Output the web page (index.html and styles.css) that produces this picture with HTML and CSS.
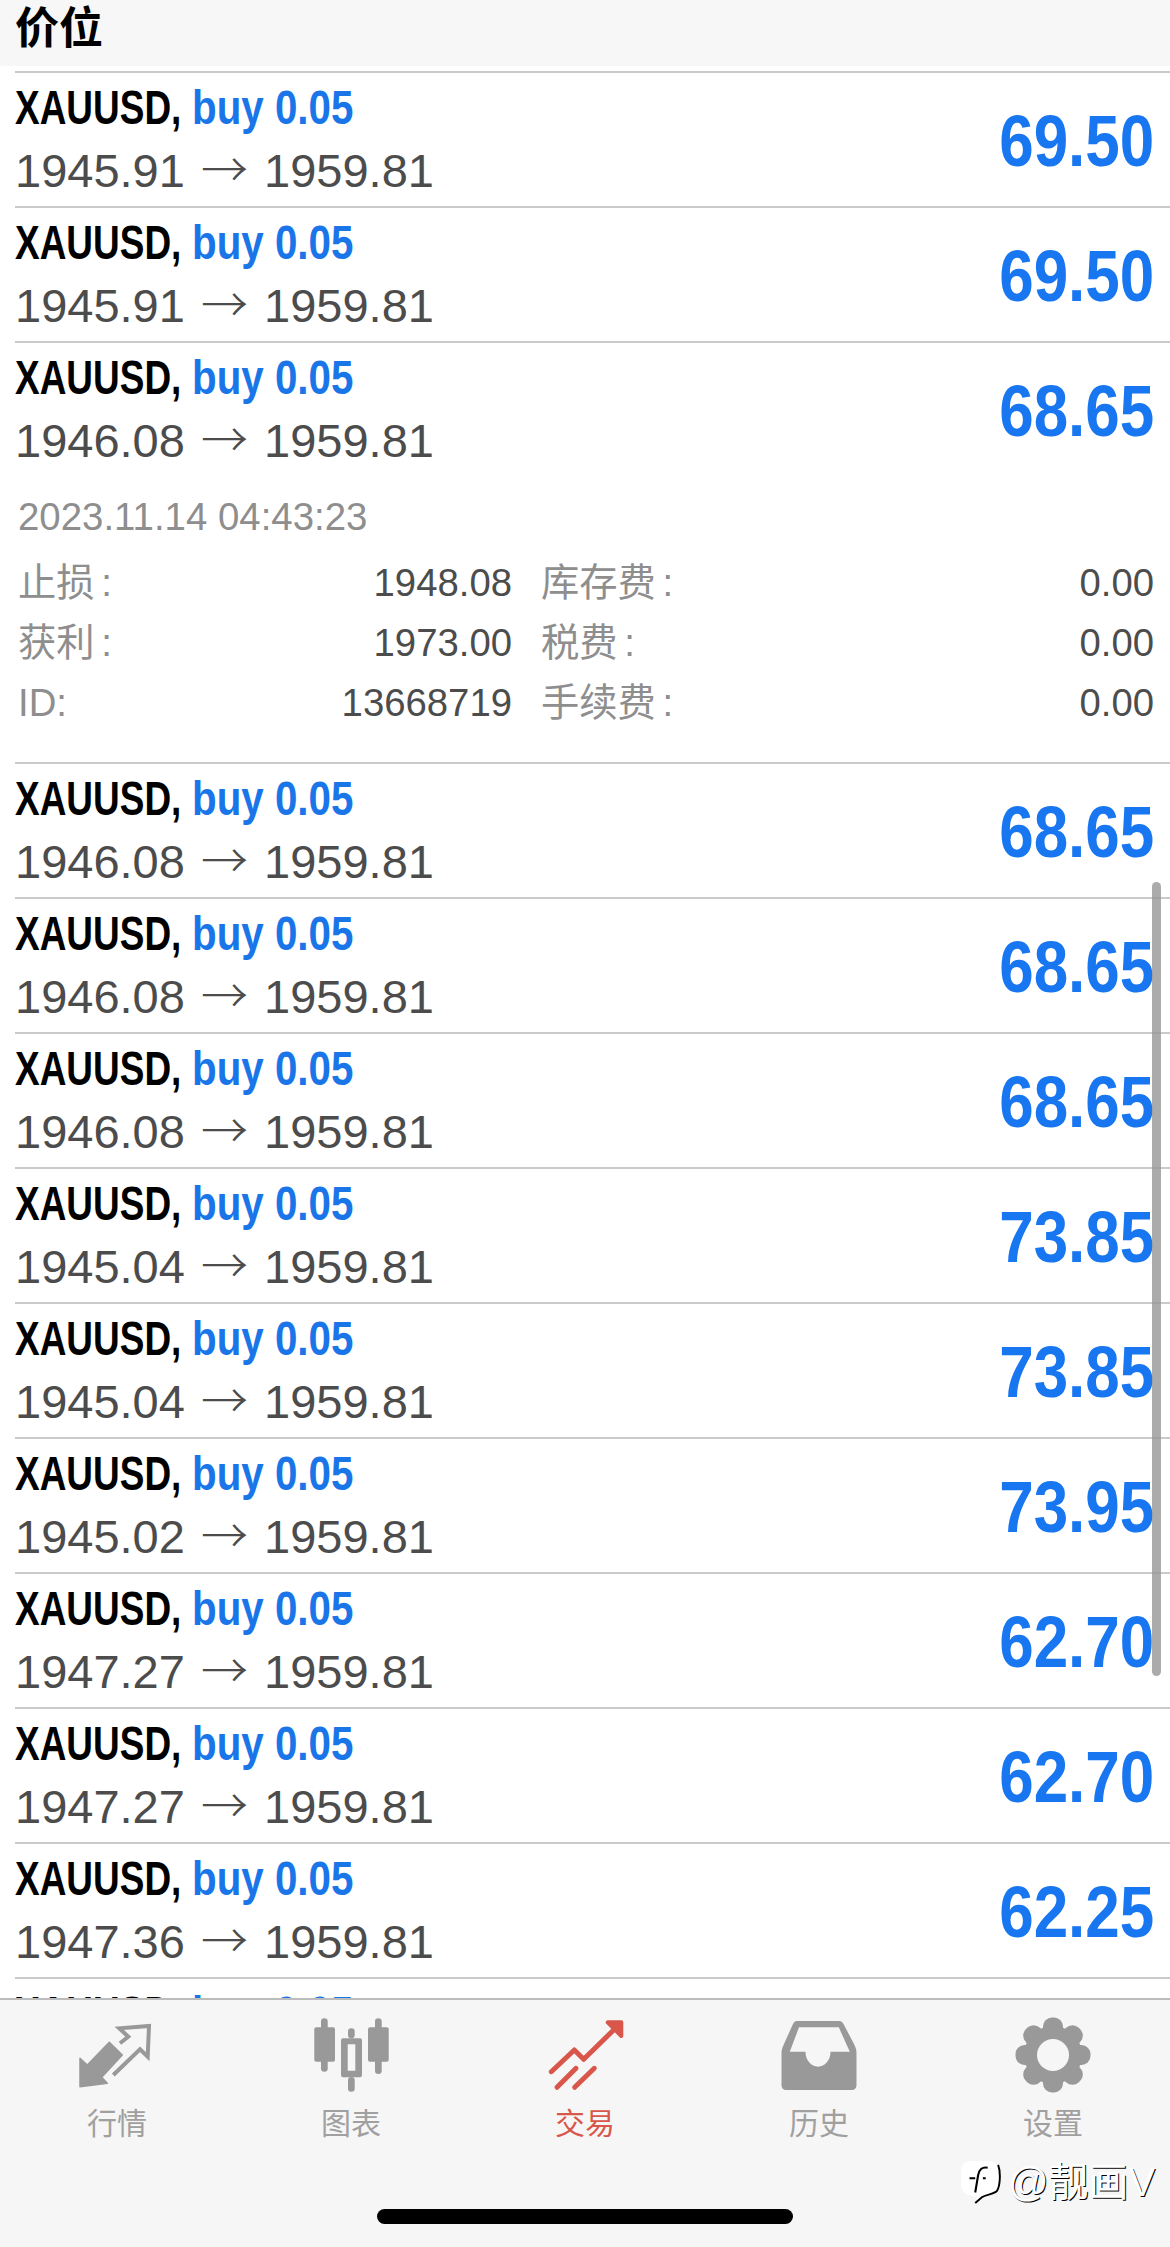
FILE: index.html
```html
<!DOCTYPE html>
<html lang="zh-CN">
<head>
    <meta charset="UTF-8">
    <title>交易</title>
    <link rel="stylesheet" href="styles.css">
</head>
<body>
    <div class="app">
        <header class="page-head">价位</header>

        <main class="trades">
            <div class="trade">
                <div class="trade-main">
                    <div class="trade-title"><span class="sym">XAUUSD,</span><span class="vol">buy 0.05</span></div>
                    <div class="trade-prices">1945.91 <span class="arrow">→</span> 1959.81</div>
                </div>
                <div class="profit"><span>69.50</span></div>
            </div>
            <div class="trade">
                <div class="trade-main">
                    <div class="trade-title"><span class="sym">XAUUSD,</span><span class="vol">buy 0.05</span></div>
                    <div class="trade-prices">1945.91 <span class="arrow">→</span> 1959.81</div>
                </div>
                <div class="profit"><span>69.50</span></div>
            </div>
            <div class="trade">
                <div class="trade-main">
                    <div class="trade-title"><span class="sym">XAUUSD,</span><span class="vol">buy 0.05</span></div>
                    <div class="trade-prices">1946.08 <span class="arrow">→</span> 1959.81</div>
                </div>
                <div class="profit"><span>68.65</span></div>
            </div>

            <div class="trade-detail">
                <div class="detail-date">2023.11.14 04:43:23</div>
                <div class="detail-grid">
                    <span class="detail-label">止损 :</span><span class="detail-value">1948.08</span>
                    <span class="detail-label">库存费 :</span><span class="detail-value">0.00</span>
                    <span class="detail-label">获利 :</span><span class="detail-value">1973.00</span>
                    <span class="detail-label">税费 :</span><span class="detail-value">0.00</span>
                    <span class="detail-label">ID:</span><span class="detail-value">13668719</span>
                    <span class="detail-label">手续费 :</span><span class="detail-value">0.00</span>
                </div>
            </div>

            <div class="trade">
                <div class="trade-main">
                    <div class="trade-title"><span class="sym">XAUUSD,</span><span class="vol">buy 0.05</span></div>
                    <div class="trade-prices">1946.08 <span class="arrow">→</span> 1959.81</div>
                </div>
                <div class="profit"><span>68.65</span></div>
            </div>
            <div class="trade">
                <div class="trade-main">
                    <div class="trade-title"><span class="sym">XAUUSD,</span><span class="vol">buy 0.05</span></div>
                    <div class="trade-prices">1946.08 <span class="arrow">→</span> 1959.81</div>
                </div>
                <div class="profit"><span>68.65</span></div>
            </div>
            <div class="trade">
                <div class="trade-main">
                    <div class="trade-title"><span class="sym">XAUUSD,</span><span class="vol">buy 0.05</span></div>
                    <div class="trade-prices">1946.08 <span class="arrow">→</span> 1959.81</div>
                </div>
                <div class="profit"><span>68.65</span></div>
            </div>
            <div class="trade">
                <div class="trade-main">
                    <div class="trade-title"><span class="sym">XAUUSD,</span><span class="vol">buy 0.05</span></div>
                    <div class="trade-prices">1945.04 <span class="arrow">→</span> 1959.81</div>
                </div>
                <div class="profit"><span>73.85</span></div>
            </div>
            <div class="trade">
                <div class="trade-main">
                    <div class="trade-title"><span class="sym">XAUUSD,</span><span class="vol">buy 0.05</span></div>
                    <div class="trade-prices">1945.04 <span class="arrow">→</span> 1959.81</div>
                </div>
                <div class="profit"><span>73.85</span></div>
            </div>
            <div class="trade">
                <div class="trade-main">
                    <div class="trade-title"><span class="sym">XAUUSD,</span><span class="vol">buy 0.05</span></div>
                    <div class="trade-prices">1945.02 <span class="arrow">→</span> 1959.81</div>
                </div>
                <div class="profit"><span>73.95</span></div>
            </div>
            <div class="trade">
                <div class="trade-main">
                    <div class="trade-title"><span class="sym">XAUUSD,</span><span class="vol">buy 0.05</span></div>
                    <div class="trade-prices">1947.27 <span class="arrow">→</span> 1959.81</div>
                </div>
                <div class="profit"><span>62.70</span></div>
            </div>
            <div class="trade">
                <div class="trade-main">
                    <div class="trade-title"><span class="sym">XAUUSD,</span><span class="vol">buy 0.05</span></div>
                    <div class="trade-prices">1947.27 <span class="arrow">→</span> 1959.81</div>
                </div>
                <div class="profit"><span>62.70</span></div>
            </div>
            <div class="trade">
                <div class="trade-main">
                    <div class="trade-title"><span class="sym">XAUUSD,</span><span class="vol">buy 0.05</span></div>
                    <div class="trade-prices">1947.36 <span class="arrow">→</span> 1959.81</div>
                </div>
                <div class="profit"><span>62.25</span></div>
            </div>
            <div class="trade">
                <div class="trade-main">
                    <div class="trade-title"><span class="sym">XAUUSD,</span><span class="vol">buy 0.05</span></div>
                    <div class="trade-prices">1947.36 <span class="arrow">→</span> 1959.81</div>
                </div>
                <div class="profit"><span>62.25</span></div>
            </div>

            <div class="scrollbar"></div>
        </main>

        <nav class="tabbar">
            <div class="tab">
                <svg class="tab-icon" viewBox="0 0 78 78">
                    <path d="M2 42.3V70.7L29.3 67.3 23.7 61.3 44.3 39 31.3 26.3 9.3 49Z" fill="#999" stroke="#999" stroke-width="1.5" stroke-linejoin="round"/>
                    <path d="M42 27.3 50.3 20.7 41.3 12.3 71 10 69.7 40.7 62 33.3 35.3 59" fill="none" stroke="#999" stroke-width="4"/>
                </svg>
                <span>行情</span>
            </div>
            <div class="tab">
                <svg class="tab-icon" viewBox="0 0 78 78" fill="#999">
                    <rect x="2.3" y="11.3" width="20.7" height="34.4" rx="2"/>
                    <rect x="9" y="2.3" width="6.7" height="53.4" rx="3.3"/>
                    <path fill-rule="evenodd" d="M31 22.3H48a2 2 0 0 1 2 2V59.3a2 2 0 0 1-2 2H31a2 2 0 0 1-2-2V24.3a2 2 0 0 1 2-2ZM35.7 28.3V54.7H43.3V28.3Z"/>
                    <rect x="36" y="12.3" width="6.7" height="10" rx="3.3"/>
                    <rect x="36" y="61" width="6.7" height="14.7" rx="3.3"/>
                    <rect x="56" y="11.3" width="20.7" height="34.4" rx="2"/>
                    <rect x="63" y="2.3" width="6.7" height="55.7" rx="3.3"/>
                </svg>
                <span>图表</span>
            </div>
            <div class="tab tab-active">
                <svg class="tab-icon" viewBox="0 0 78 78" fill="none" stroke="#d9574a" stroke-width="5" stroke-linecap="round" stroke-linejoin="round">
                    <path d="M5.3 55.7 28.3 34 37.7 43.3 72.7 9"/>
                    <path d="M61.7 6.3H75.3V20Z" fill="#d9574a" stroke-width="4"/>
                    <path d="M11 71.3 30 52.3"/>
                    <path d="M28.7 71.3 48.3 52.3"/>
                </svg>
                <span>交易</span>
            </div>
            <div class="tab">
                <svg class="tab-icon" viewBox="0 0 78 78">
                    <path fill="#999" fill-rule="evenodd" d="M17 5H59C61 5 62.500 6 63.500 8L74 28C76 32 76.500 34 76.500 38V69C76.500 72 74.500 74 71.500 74H6.500C3.500 74 1.500 72 1.500 69V38C1.500 34 2 32 4 28L13 8C14 6 15 5 17 5ZM19 11.300 9.800 35.700H25.500A12.500 15 0 0 0 50.500 35.700H69.800L58.800 11.300Z"/>
                </svg>
                <span>历史</span>
            </div>
            <div class="tab">
                <svg class="tab-icon" viewBox="0 0 78 78" fill="#999">
                    <circle cx="39" cy="39" r="29"/>
                    <rect x="29" y="1.500" width="20" height="75" rx="9"/>
                    <rect x="29" y="1.500" width="20" height="75" rx="9" transform="rotate(45 39 39)"/>
                    <rect x="29" y="1.500" width="20" height="75" rx="9" transform="rotate(90 39 39)"/>
                    <rect x="29" y="1.500" width="20" height="75" rx="9" transform="rotate(135 39 39)"/>
                    <circle cx="39" cy="39" r="16" fill="#f6f6f6"/>
                </svg>
                <span>设置</span>
            </div>
        </nav>

        <div class="watermark">
            <svg class="wm-logo" viewBox="0 0 44 48">
                <path d="M14 2H30C38 2 42 7 42 15V27C42 35 36 38 28 39L17 46 19 39C8 39 2 34 2 26V14C2 6 6 2 14 2Z" fill="#fff"/>
                <path d="M41 6C44 14 43 28 40 33 37 37 28 37 24 40L17 46" fill="none" stroke="#000" stroke-width="2"/>
                <path d="M30 9C24 8 21 11 20 17L17 35M11 20H17M25 20H28" fill="none" stroke="#000" stroke-width="2.200"/>
            </svg>
            <span>@靓画V</span>
        </div>
        <div class="home-bar"></div>
    </div>
</body>
</html>
```

FILE: styles.css
```css
* {
    box-sizing: border-box;
}
html, body {
    margin: 0;
    height: 100%;
    overflow: hidden;
}
body {
    font-family: "Liberation Sans", "Noto Sans CJK SC", sans-serif;
    background-color: #fff;
}
.app {
    position: relative;
    display: flex;
    flex-direction: column;
    height: 2247px;
    overflow: hidden;
}
.page-head {
    flex: none;
    height: 66px;
    padding-left: 15px;
    background-color: #f7f7f7;
    color: #000;
    font-size: 44px;
    font-weight: 700;
    line-height: 58px;
}

/* trade list */
.trades {
    position: relative;
    flex: 1;
    min-height: 0;
    padding-top: 5px;
    overflow: hidden;
}
.trade {
    display: flex;
    justify-content: space-between;
    align-items: center;
    height: 135px;
    margin-left: 15px;
    padding-right: 16px;
    border-top: 2px solid #cacaca;
}
.trade-title {
    display: flex;
    column-gap: 11px;
    font-size: 48px;
    font-weight: 700;
    line-height: 58px;
}
.sym {
    width: 166px;
    color: #000;
    white-space: nowrap;
    transform: scaleX(.77);
    transform-origin: left;
}
.vol {
    color: #1a76e8;
    white-space: nowrap;
    transform: scaleX(.84);
    transform-origin: left;
}
.trade-prices {
    color: #4c4c4c;
    font-size: 47px;
    line-height: 60px;
    white-space: nowrap;
}
.arrow {
    margin: 0 3px;
    font-family: "Noto Sans CJK SC", sans-serif;
    font-weight: 300;
}
.profit {
    padding-top: 2px;
    color: #1776f0;
    font-size: 72px;
    font-weight: 700;
}
.profit span {
    display: block;
    transform: scaleX(.86);
    transform-origin: right;
}
.trade-detail {
    height: 286px;
    padding: 13px 16px 0 18px;
}
.detail-date {
    color: #8e8e8e;
    font-size: 38.4px;
    line-height: 56px;
}
.detail-grid {
    display: grid;
    grid-template-columns: 120px 374px 159px 1fr;
    grid-auto-rows: 60px;
    margin-top: 8px;
    font-size: 38.3px;
    line-height: 60px;
    word-spacing: -4px;
}
.detail-label {
    color: #8e8e8e;
    white-space: nowrap;
}
.detail-label:nth-child(4n+3) {
    padding-left: 29px;
}
.detail-value {
    color: #4c4c4c;
    text-align: right;
}
.scrollbar {
    position: absolute;
    top: 816px;
    right: 9px;
    width: 9px;
    height: 794px;
    border-radius: 5px;
    background-color: rgba(150, 150, 150, .8);
}

/* bottom tabs */
.tabbar {
    position: relative;
    flex: none;
    display: grid;
    grid-template-columns: repeat(5, 1fr);
    height: 249px;
    padding-top: 16px;
    border-top: 2px solid #bcbcbc;
    background-color: #f6f6f6;
}
.tab {
    display: flex;
    flex-direction: column;
    align-items: center;
    color: #a0a0a0;
    font-size: 30px;
    line-height: 40px;
}
.tab-icon {
    width: 78px;
    height: 78px;
    margin-bottom: 10px;
}
.tab-active {
    color: #d9574a;
}
.watermark {
    position: absolute;
    top: 2157px;
    left: 959px;
    display: flex;
    align-items: center;
    column-gap: 7px;
    color: #fff;
    font-size: 40px;
    line-height: 50px;
    text-shadow: 1px 1px 0 #000;
    white-space: nowrap;
}
.wm-logo {
    width: 42px;
    height: 46px;
}
.home-bar {
    position: absolute;
    top: 2209px;
    left: 377px;
    width: 416px;
    height: 15px;
    border-radius: 8px;
    background-color: #000;
}
```
